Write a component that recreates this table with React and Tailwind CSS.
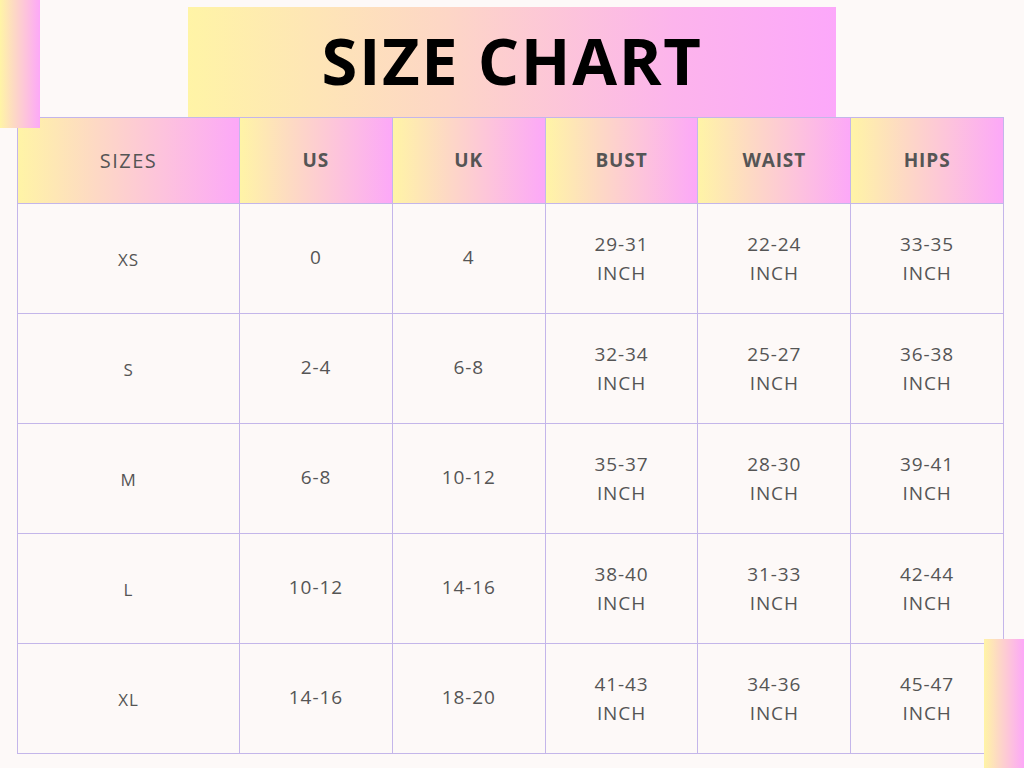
import React from "react";

const cols = ["US", "UK", "BUST", "WAIST", "HIPS"];
const rows = [
  ["XS", "0", "4", "29-31", "22-24", "33-35"],
  ["S", "2-4", "6-8", "32-34", "25-27", "36-38"],
  ["M", "6-8", "10-12", "35-37", "28-30", "39-41"],
  ["L", "10-12", "14-16", "38-40", "31-33", "42-44"],
  ["XL", "14-16", "18-20", "41-43", "34-36", "45-47"],
];

const grad = "bg-[linear-gradient(to_right,#fff4a6_0%,#fdd9c4_35%,#fdc3dc_65%,#fca8f8_100%)]";

export default function App() {
  return (
    <div className="relative w-[1024px] h-[768px] overflow-hidden bg-[#fdf9f8] font-['Open_Sans',sans-serif] text-[#555]">
      <div className={`absolute left-0 top-0 w-[40px] h-[128px] z-10 ${grad}`} />
      <div className={`absolute left-[984px] top-[639px] w-[40px] h-[129px] z-10 ${grad}`} />
      <div className="flex flex-col pt-[7px]">
        <div className="flex">
          <div className="ml-[188px] w-[648px] h-[110px] flex items-center justify-center bg-[linear-gradient(to_right,#fff4a6_0%,#fdd6c6_40%,#fcb4ec_75%,#fca8fa_100%)]">
            <span className="text-[65px] font-bold text-black tracking-[1.6px] leading-none mt-[-4px]">SIZE CHART</span>
          </div>
        </div>
        <div className="ml-[17px] w-[987px] grid grid-cols-[222px_repeat(5,1fr)] border-t border-l border-[#c4b6ea] tracking-[0.9px]">
          <div className={`h-[86px] flex items-center justify-center border-r border-b border-[#c4b6ea] text-[20px] tracking-[1.5px] ${grad}`}>SIZES</div>
          {cols.map((c) => (
            <div key={c} className={`h-[86px] flex items-center justify-center border-r border-b border-[#c4b6ea] text-[19px] font-bold ${grad}`}>{c}</div>
          ))}
          {rows.map((r) =>
            r.map((v, i) => (
              <div key={r[0] + i} className="h-[110px] flex flex-col items-center justify-center border-r border-b border-[#c4b6ea] text-[19px] leading-[29px]">
                {i < 3 ? (
                  <span className={i === 0 ? "text-[17px] mt-[2px]" : "mt-[-2px]"}>{v}</span>
                ) : (
                  <>
                    <span>{v}</span>
                    <span>INCH</span>
                  </>
                )}
              </div>
            ))
          )}
        </div>
      </div>
    </div>
  );
}
